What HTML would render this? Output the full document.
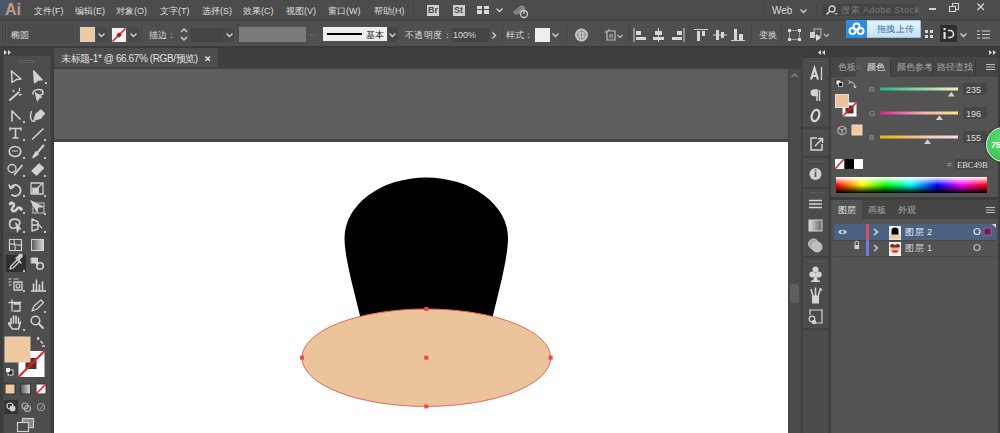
<!DOCTYPE html>
<html><head><meta charset="utf-8">
<style>
*{box-sizing:border-box;margin:0;padding:0}
html,body{width:1000px;height:433px;overflow:hidden;background:#535353;font-family:"Liberation Sans",sans-serif;color:#d6d6d6}
.a{position:absolute}
.t{position:absolute;white-space:nowrap;font-size:10px;line-height:12px}
svg{position:absolute;overflow:visible}
.cb{font-size:9px;line-height:11px;color:#dadada}
.pt{font-size:9px;line-height:11px}
.mb{top:6px;font-size:9px;line-height:11px;color:#dcdcdc}
</style></head><body>

<!-- MENUBAR -->
<div class="a" style="left:0;top:0;width:1000px;height:20px;background:#4c4c4c"></div>
<div class="a" style="left:0;top:19px;width:1000px;height:2px;background:#434343"></div>
<div class="a" style="left:0;top:0;width:22px;height:16px;background:linear-gradient(90deg,#4a5868,#4c5058)"></div>
<div class="t" style="left:5px;top:1px;font-size:16px;line-height:18px;color:#c49a80;letter-spacing:0px;font-weight:bold">Ai</div>
<div class="t mb" style="left:34px">文件(F)</div>
<div class="t mb" style="left:75px">编辑(E)</div>
<div class="t mb" style="left:116px">对象(O)</div>
<div class="t mb" style="left:160px">文字(T)</div>
<div class="t mb" style="left:202px">选择(S)</div>
<div class="t mb" style="left:243px">效果(C)</div>
<div class="t mb" style="left:286px">视图(V)</div>
<div class="t mb" style="left:328px">窗口(W)</div>
<div class="t mb" style="left:374px">帮助(H)</div>
<div class="a" style="left:413px;top:2px;width:1px;height:15px;background:#444"></div>
<div class="a" style="left:427px;top:5px;width:12px;height:11px;background:#cfcfcf"></div>
<div class="t" style="left:428px;top:5px;font-size:9px;line-height:11px;color:#4a4a4a;font-weight:bold">Br</div>
<div class="a" style="left:453px;top:5px;width:12px;height:11px;background:#cfcfcf"></div>
<div class="t" style="left:454px;top:5px;font-size:9px;line-height:11px;color:#4a4a4a;font-weight:bold">St</div>
<div class="a" style="left:477px;top:6px;width:5px;height:3px;background:#d8d8d8"></div>
<div class="a" style="left:484px;top:6px;width:5px;height:3px;background:#d8d8d8"></div>
<div class="a" style="left:477px;top:10px;width:5px;height:4px;background:#d8d8d8"></div>
<div class="a" style="left:484px;top:10px;width:5px;height:4px;background:#d8d8d8"></div>
<svg style="left:496px;top:8px" width="8" height="5"><path d="M0.5 0.5 L3.5 3.5 L6.5 0.5" stroke="#d0d0d0" stroke-width="1.3" fill="none"/></svg>
<svg style="left:512px;top:3px" width="18" height="16"><path d="M2 9 L9 3 L12 4 L4 11 Z M6 11 L13 5" stroke="#8a8a8a" stroke-width="1.5" fill="#777"/><circle cx="12" cy="11" r="3.5" stroke="#cfcfcf" stroke-width="1.3" fill="#4c4c4c"/><path d="M12 7 V11" stroke="#cfcfcf" stroke-width="1.3"/></svg>
<div class="t" style="left:772px;top:5px;font-size:10px;color:#d8d8d8">Web</div>
<svg style="left:800px;top:9px" width="8" height="5"><path d="M0.5 0.5 L3.5 3.5 L6.5 0.5" stroke="#d0d0d0" stroke-width="1.3" fill="none"/></svg>
<div class="a" style="left:763px;top:2px;width:1px;height:15px;background:#444"></div>
<div class="a" style="left:816px;top:2px;width:1px;height:15px;background:#444"></div>
<div class="a" style="left:822px;top:4px;width:94px;height:12px;background:#444444"></div>
<svg style="left:825px;top:5px" width="14" height="11"><circle cx="7" cy="4" r="3" stroke="#d8d8d8" stroke-width="1.3" fill="none"/><path d="M4.8 6.2 L1.5 9.5" stroke="#d8d8d8" stroke-width="1.6"/><path d="M9.5 8 L11 9.5 L12.5 8" stroke="#d8d8d8" stroke-width="1" fill="none"/></svg>
<div class="t" style="left:841px;top:4px;font-size:9px;line-height:12px;color:#7a7a7a;letter-spacing:0.5px">搜索 Adobe Stock</div>
<div class="a" style="left:929px;top:8px;width:7px;height:2px;background:#d0d0d0"></div>
<svg style="left:949px;top:3px" width="11" height="10"><path d="M3.5 3 V0.5 H9.5 V6.5 H6.5" stroke="#d0d0d0" stroke-width="1.1" fill="none"/><rect x="0.5" y="3.5" width="6" height="5" stroke="#d0d0d0" stroke-width="1.1" fill="none"/></svg>
<svg style="left:977px;top:3px" width="8" height="8"><path d="M0.5 0.5 L7 7 M7 0.5 L0.5 7" stroke="#d0d0d0" stroke-width="1.3"/></svg>

<!-- CONTROL BAR -->
<div class="a" style="left:0;top:21px;width:1000px;height:25px;background:#4f4f4f"></div>
<div class="a" style="left:0;top:46px;width:1000px;height:2px;background:#3a3a3a"></div>
<div class="a" style="left:2px;top:24px;width:1px;height:19px;background:#444"></div>
<div class="a" style="left:5px;top:24px;width:1px;height:19px;background:#444"></div>
<div class="a" style="left:8px;top:24px;width:66px;height:19px;background:#4b4b4b;border:1px solid #474747"></div>
<div class="t cb" style="left:11px;top:30px">椭圆</div>
<div class="a" style="left:76px;top:24px;width:1px;height:19px;background:#454545"></div>
<div class="a" style="left:80px;top:27px;width:15px;height:15px;background:#efc89e;border:1px solid #d9d0c4"></div>
<div class="a" style="left:96px;top:27px;width:11px;height:15px;background:#474747"></div>
<svg style="left:98px;top:33px" width="8" height="5"><path d="M0.5 0.5 L3.5 3.5 L6.5 0.5" stroke="#d0d0d0" stroke-width="1.4" fill="none"/></svg>
<div class="a" style="left:109px;top:24px;width:1px;height:19px;background:#454545"></div>
<svg style="left:112px;top:28px" width="15" height="14"><rect x="0" y="0" width="14" height="14" fill="#f2f2f2"/><path d="M0.5 13.5 L13.5 0.5" stroke="#c0283a" stroke-width="1.6"/><rect x="5" y="5" width="4" height="4" fill="#a02030" transform="rotate(45 7 7)"/></svg>
<div class="a" style="left:128px;top:27px;width:11px;height:15px;background:#474747"></div>
<svg style="left:130px;top:33px" width="8" height="5"><path d="M0.5 0.5 L3.5 3.5 L6.5 0.5" stroke="#d0d0d0" stroke-width="1.4" fill="none"/></svg>
<div class="a" style="left:141px;top:24px;width:1px;height:19px;background:#454545"></div>
<div class="t cb" style="left:149px;top:30px">描边：</div>
<svg style="left:180px;top:28px" width="9" height="13"><path d="M1 4 L4 1 L7 4 M1 9 L4 12 L7 9" stroke="#d0d0d0" stroke-width="1.4" fill="none"/></svg>
<div class="a" style="left:190px;top:28px;width:32px;height:14px;background:#444444"></div>
<div class="a" style="left:222px;top:28px;width:12px;height:14px;background:#474747"></div>
<svg style="left:226px;top:33px" width="8" height="5"><path d="M0.5 0.5 L3.5 3.5 L6.5 0.5" stroke="#d0d0d0" stroke-width="1.4" fill="none"/></svg>
<div class="a" style="left:237px;top:24px;width:1px;height:19px;background:#454545"></div>
<div class="a" style="left:239px;top:27px;width:67px;height:15px;background:#7a7a7a"></div>
<svg style="left:309px;top:33px" width="8" height="5"><path d="M0.5 0.5 L3.5 3.5 L6.5 0.5" stroke="#5e5e5e" stroke-width="1.4" fill="none"/></svg>
<div class="a" style="left:323px;top:27px;width:64px;height:14px;background:#eeeeee"></div>
<div class="a" style="left:327px;top:33px;width:35px;height:2px;background:#000"></div>
<div class="t cb" style="left:366px;top:30px;color:#222">基本</div>
<div class="a" style="left:388px;top:27px;width:10px;height:15px;background:#454545"></div>
<svg style="left:389px;top:33px" width="8" height="5"><path d="M0.5 0.5 L3.5 3.5 L6.5 0.5" stroke="#d0d0d0" stroke-width="1.4" fill="none"/></svg>
<div class="t cb" style="left:405px;top:30px;letter-spacing:0.4px">不透明度：</div>
<div class="a" style="left:452px;top:28px;width:37px;height:14px;background:#444444"></div>
<div class="t cb" style="left:453px;top:30px;font-size:9px">100%</div>
<svg style="left:492px;top:32px" width="5" height="8"><path d="M0.5 0.5 L3.5 3.5 L0.5 6.5" stroke="#d0d0d0" stroke-width="1.4" fill="none"/></svg>
<div class="a" style="left:502px;top:24px;width:1px;height:19px;background:#454545"></div>
<div class="t cb" style="left:506px;top:30px">样式：</div>
<div class="a" style="left:535px;top:28px;width:15px;height:14px;background:#eeeeee"></div>
<svg style="left:552px;top:33px" width="8" height="5"><path d="M0.5 0.5 L3.5 3.5 L6.5 0.5" stroke="#d0d0d0" stroke-width="1.4" fill="none"/></svg>
<div class="a" style="left:566px;top:24px;width:1px;height:19px;background:#454545"></div>
<svg style="left:574px;top:28px" width="16" height="15"><circle cx="7.5" cy="7" r="6.5" fill="#c8c8c8"/><circle cx="7.5" cy="7" r="4" fill="none" stroke="#8a8a8a" stroke-width="1"/><path d="M7.5 2 V12 M2.5 7 H12.5" stroke="#8a8a8a" stroke-width="0.8"/></svg>
<div class="a" style="left:601px;top:24px;width:1px;height:19px;background:#454545"></div>
<svg style="left:605px;top:29px" width="20" height="13"><path d="M2 2 H10 V11 H2 Z" stroke="#bdbdbd" stroke-width="1.2" fill="none"/><path d="M0 3 H2 M4 0 V2" stroke="#bdbdbd" stroke-width="1"/><rect x="4" y="5" width="4" height="4" fill="#888"/><path d="M12.5 6 L15 8.5 L17.5 6" stroke="#bdbdbd" stroke-width="1.2" fill="none"/></svg>
<div class="a" style="left:629px;top:24px;width:1px;height:19px;background:#454545"></div>
<svg style="left:633px;top:28px" width="14" height="14"><path d="M1 0 V14" stroke="#cfcfcf" stroke-width="1"/><rect x="3" y="3" width="5" height="4" fill="#d8d8d8"/><rect x="3" y="9" width="10" height="3" fill="#d8d8d8"/></svg>
<svg style="left:652px;top:28px" width="14" height="14"><path d="M6.5 0 V14" stroke="#cfcfcf" stroke-width="1"/><rect x="3" y="3" width="7" height="4" fill="#d8d8d8"/><rect x="1" y="9" width="11" height="3" fill="#d8d8d8"/></svg>
<svg style="left:671px;top:28px" width="14" height="14"><path d="M13 0 V14" stroke="#cfcfcf" stroke-width="1"/><rect x="6" y="3" width="5" height="4" fill="#d8d8d8"/><rect x="1" y="9" width="10" height="3" fill="#d8d8d8"/></svg>
<div class="a" style="left:689px;top:24px;width:1px;height:19px;background:#454545"></div>
<svg style="left:694px;top:28px" width="14" height="14"><path d="M0 1.5 H14" stroke="#cfcfcf" stroke-width="1"/><rect x="3" y="3" width="3" height="10" fill="#d8d8d8"/><rect x="8" y="3" width="3" height="5" fill="#d8d8d8"/></svg>
<svg style="left:713px;top:28px" width="14" height="14"><path d="M0 7 H14" stroke="#cfcfcf" stroke-width="1"/><rect x="3" y="2" width="3" height="10" fill="#d8d8d8"/><rect x="8" y="4" width="3" height="6" fill="#d8d8d8"/></svg>
<svg style="left:731px;top:28px" width="14" height="14"><path d="M0 12.5 H14" stroke="#cfcfcf" stroke-width="1"/><rect x="3" y="1" width="3" height="11" fill="#d8d8d8"/><rect x="8" y="6" width="4" height="6" fill="#d8d8d8"/></svg>
<div class="a" y="" style="left:751px;top:24px;width:1px;height:19px;background:#454545"></div>
<div class="t cb" style="left:759px;top:30px">变换</div>
<div class="a" style="left:781px;top:24px;width:1px;height:19px;background:#454545"></div>
<svg style="left:788px;top:29px" width="13" height="12"><rect x="0" y="0" width="3" height="3" fill="#d8d8d8"/><rect x="10" y="0" width="3" height="3" fill="#d8d8d8"/><rect x="0" y="9" width="3" height="3" fill="#d8d8d8"/><rect x="10" y="9" width="3" height="3" fill="#d8d8d8"/><path d="M3 1.5 H10 M3 10.5 H10 M1.5 3 V9 M11.5 3 V9" stroke="#9a9a9a" stroke-width="1"/></svg>
<svg style="left:809px;top:28px" width="22" height="14"><rect x="5" y="1" width="7" height="7" fill="none" stroke="#bdbdbd" stroke-width="1"/><rect x="1" y="4" width="5" height="6" fill="#cfcfcf"/><path d="M7 6 L12 10 L7 13 Z" fill="#e0e0e0"/><path d="M15 6 L17.5 8.5 L20 6" stroke="#bdbdbd" stroke-width="1.2" fill="none"/></svg>
<svg style="left:925px;top:30px" width="9" height="9"><rect x="0" y="0" width="3" height="3" fill="#d8d8d8"/><rect x="5" y="0" width="3" height="3" fill="#d8d8d8"/><rect x="0" y="5" width="3" height="3" fill="#d8d8d8"/><rect x="5" y="5" width="3" height="3" fill="#d8d8d8"/></svg>
<div class="a" style="left:940px;top:25px;width:17px;height:17px;background:#2e2e2e"></div>
<svg style="left:943px;top:28px" width="12" height="12"><rect x="0.5" y="0" width="2.2" height="2.2" fill="#e0e0e0"/><rect x="0.5" y="4" width="2.2" height="7" fill="#e0e0e0"/><path d="M5 2.5 H7 A3.5 3.5 0 0 1 7 9.5 H5" stroke="#e0e0e0" stroke-width="1.6" fill="none"/></svg>
<svg style="left:960px;top:33px" width="8" height="5"><path d="M0.5 0.5 L3.5 3.5 L6.5 0.5" stroke="#d0d0d0" stroke-width="1.4" fill="none"/></svg>
<svg style="left:977px;top:30px" width="14" height="10"><path d="M0 1 H3 M5 1 H13 M0 4.5 H3 M5 4.5 H13 M0 8 H3 M5 8 H13" stroke="#cfcfcf" stroke-width="1.2"/></svg>
<div class="a" style="left:846px;top:20px;width:75px;height:18px;background:linear-gradient(#e6f4fd,#c4e3f8);border-radius:1px;border:1px solid #8ec3ea"></div>
<div class="a" style="left:846px;top:20px;width:21px;height:18px;background:#2b8de2"></div>
<svg style="left:848px;top:22px" width="17" height="14"><circle cx="8.5" cy="4.5" r="3" fill="none" stroke="#fff" stroke-width="2"/><circle cx="4.5" cy="9" r="3" fill="none" stroke="#fff" stroke-width="2"/><circle cx="12.5" cy="9" r="3" fill="none" stroke="#fff" stroke-width="2"/></svg>
<div class="t" style="left:877px;top:23px;font-size:9px;color:#3a6aa6;letter-spacing:0.3px">拖拽上传</div>

<!-- TAB BAR -->
<div class="a" style="left:54px;top:48px;width:747px;height:20px;background:#3f3f3f"></div>
<div class="a" style="left:54px;top:48px;width:164px;height:20px;background:#4d4d4d"></div>
<div class="t" style="left:61px;top:53px;font-size:10px;color:#e2e2e2;letter-spacing:-0.4px">未标题-1* @ 66.67% (RGB/预览)</div>
<svg style="left:205px;top:56px" width="6" height="6"><path d="M0.5 0.5 L5 5 M5 0.5 L0.5 5" stroke="#e2e2e2" stroke-width="1.4"/></svg>

<!-- PASTEBOARD / ARTBOARD -->
<div class="a" style="left:54px;top:67px;width:734px;height:2px;background:#424242"></div>
<div class="a" style="left:54px;top:69px;width:734px;height:364px;background:#5e5e5e"></div>
<div class="a" style="left:54px;top:139px;width:734px;height:3px;background:#474747"></div>
<div class="a" style="left:54px;top:142px;width:734px;height:291px;background:#ffffff"></div>

<!-- LEFT TOOLBAR -->
<div class="a" style="left:0;top:48px;width:54px;height:385px;background:#3d3d3d"></div>
<div class="a" style="left:1px;top:48px;width:50px;height:8px;background:#404040"></div>
<svg style="left:4px;top:50px" width="8" height="5"><path d="M0 0 L3 2.5 L0 5 Z M4 0 L7 2.5 L4 5 Z" fill="#d8d8d8"/></svg>
<div class="a" style="left:3px;top:56px;width:48px;height:377px;background:#4d4d4d;border-left:1px solid #474747;border-right:1px solid #474747"></div>
<div class="a" style="left:18px;top:60px;width:17px;height:1px;background:#5e5e5e"></div>
<div class="a" style="left:18px;top:62px;width:17px;height:1px;background:#5e5e5e"></div>
<div class="a" style="left:6px;top:255px;width:20px;height:17px;background:#303030"></div>
<div class="a" style="left:5px;top:233px;width:44px;height:3px;background:#474747"></div>
<div class="a" style="left:6px;top:177px;width:42px;height:1px;background:#454545"></div>
<svg style="left:0;top:0" width="54" height="433">
<defs><linearGradient id="gg" x1="0" x2="1"><stop offset="0" stop-color="#555"/><stop offset="1" stop-color="#ddd"/></linearGradient></defs>
<g fill="none" stroke="#d2d2d2" stroke-width="1.5" stroke-linejoin="round" stroke-linecap="round">
 <path d="M11.5 71 L21 79 L16.5 79.5 L12 82.5 Z"/>
 <path d="M33.7 71 L42 79.8 L38 80 L34.6 82.6 Z" fill="#d2d2d2"/>
 <path d="M10 100 L18.5 92.5" stroke-width="2"/><path d="M13 90.5 L14 91.5 M19.5 88.5 V90.5 M21 94.5 L19.5 95" stroke-width="1.4"/>
 <path d="M33 94 C32 89 42 88 43 92 C43.5 95 40 95.5 37.5 95" stroke-width="1.5"/><path d="M35.5 92.5 L42 97.5 L39 98 L37.5 101 Z" fill="#d2d2d2" stroke-width="1"/>
 <path d="M12 121 V111 L20 119" stroke-width="1.6"/>
 <path d="M31.5 111.5 C30 115 30 118 32 121 L35 121" stroke-width="1.3"/><path d="M34 120 L36 114 L41 110 L44.5 113.5 L40.5 118.5 Z" fill="#d2d2d2" stroke-width="1.2"/>
 <path d="M10 128.5 H21 M10 128 V130 M21 128 V130 M15.5 128.5 V138 M13 138 H18" stroke-width="1.6"/>
 <path d="M32.5 139 L43 129" stroke-width="1.6"/>
 <ellipse cx="15" cy="151.5" rx="5.8" ry="5" stroke-width="1.6"/><path d="M12.5 151 H17.5" stroke-width="1"/>
 <path d="M33 157.5 L36 152 L38 154 Z" fill="#d2d2d2" stroke-width="1.6"/><path d="M37 153 L43.5 145.5" stroke-width="2"/>
 <circle cx="12" cy="168.5" r="4" stroke-width="1.4"/><path d="M14.5 174.5 L22 165.5" stroke-width="1.8"/>
 <path d="M32 171 L39 164 L43.5 168 L36.5 175 Z" fill="#d2d2d2" stroke-width="1.2"/>
 <path d="M10.5 187.5 A5.5 5.5 0 1 1 12 195" stroke-width="1.8"/><path d="M9 185 L10.5 188.5 L14 187" stroke-width="1.4"/>
 <rect x="31" y="183" width="12" height="11" stroke-width="1.3"/><rect x="32.5" y="188" width="6" height="5" fill="#d2d2d2" stroke-width="0.8"/><path d="M38 187.5 L42 184" stroke-width="1.4"/>
 <path d="M10 204 C12 202 14 203 14 205 C14 207 11 208 12 210 C13 212 16 211 17 209 C18 207 20 207 21.5 209.5" stroke-width="2.6"/><circle cx="11" cy="203" r="1.6" fill="#d2d2d2" stroke="none"/><circle cx="21" cy="209" r="1.6" fill="#d2d2d2" stroke="none"/>
 <rect x="33" y="203" width="11" height="10" stroke-width="1.1" stroke-dasharray="2 1.2"/><path d="M31 201 L37 212 L38 207 L43 207 Z" fill="#d2d2d2" stroke-width="1"/>
 <path d="M9.5 223.5 C9.5 219 15 218 19 220.5 C21 222.5 19 227 15 228 C11 229 9.5 227 9.5 223.5 Z" stroke-width="1.6"/><path d="M16 223 L21 229 L18.5 229 L17.5 232 Z" fill="#d2d2d2" stroke-width="1"/>
 <path d="M32 219 L38 222 V229 L32 231 Z M32 225 H38" stroke-width="1.4"/><path d="M38 224 L42 228" stroke-width="1.1"/>
 <rect x="9.5" y="239.5" width="12" height="11" stroke-width="1.2"/><path d="M9.5 244 C13 243 17 246 21.5 245 M14 239.5 C14 243 16 247 15 250.5" stroke-width="1.1"/>
</g>
<rect x="31.5" y="239.5" width="12" height="11" fill="url(#gg)" stroke="#d2d2d2" stroke-width="1"/>
<g fill="none" stroke="#d2d2d2" stroke-width="1.5" stroke-linejoin="round" stroke-linecap="round">
 <path d="M10 269 L11 266 L17.5 259.5 L19.5 261.5 L13 268 Z" stroke-width="1.3"/><path d="M17 257.5 L20 254.5 C21.5 254 22.5 255 22 256.5 L19 259.5" fill="#d2d2d2" stroke-width="1.4"/><path d="M16 258 L21 263" stroke-width="1.5"/>
 <rect x="31.5" y="258" width="6" height="5" fill="#d2d2d2" stroke-width="1"/><circle cx="40" cy="266" r="3.3" stroke-width="1.6"/><path d="M36 263 L38 265" stroke-width="1.1"/>
 <rect x="14" y="282" width="8" height="8" stroke-width="1.3"/><circle cx="18" cy="286" r="2" stroke-width="1.1"/><path d="M9 279 H11 M9 282 H11 M9 285 H11 M14 279 H18" stroke-width="1"/>
 <path d="M31.5 291 H44 M33.5 290 V284 M36.5 290 V280 M39.5 290 V285 M42.5 290 V282" stroke-width="1.6"/>
 <path d="M12 300 V311 M9 302.5 H21 M14 304 H20 V311 H14" stroke-width="1.3"/>
 <path d="M32 311 L34 306 L41 300 L43.5 302.5 L37 309 Z" stroke-width="1.3"/>
 <path d="M11 324 V318.5 M13.5 323 V316 M16 323 V316 M18.5 323.5 V318 M11 324 C9.5 322 8 322.5 9 324.5 L12.5 329 H18.5 L20.5 322" stroke-width="1.6"/>
 <circle cx="35.5" cy="320.5" r="4.3" stroke-width="1.5"/><path d="M38.5 323.5 L43 328" stroke-width="2"/>
</g>
<g fill="#c4c4c4">
<rect x="45" y="82" width="2" height="2"/><rect x="23" y="121" width="2" height="2"/><rect x="23" y="139" width="2" height="2"/><rect x="44" y="139" width="2" height="2"/><rect x="23" y="157" width="2" height="2"/><rect x="44" y="157" width="2" height="2"/><rect x="23" y="175" width="2" height="2"/><rect x="44" y="175" width="2" height="2"/><rect x="23" y="195" width="2" height="2"/><rect x="44" y="195" width="2" height="2"/><rect x="23" y="212" width="2" height="2"/><rect x="44" y="213" width="2" height="2"/><rect x="23" y="231" width="2" height="2"/><rect x="44" y="231" width="2" height="2"/><rect x="23" y="270" width="2" height="2"/><rect x="23" y="290" width="2" height="2"/><rect x="44" y="290" width="2" height="2"/><rect x="44" y="311" width="2" height="2"/><rect x="23" y="329" width="2" height="2"/>
</g>
<!-- fill/stroke -->
<rect x="18.5" y="351" width="26" height="26" fill="#ffffff"/>
<rect x="25.5" y="358" width="11" height="11" fill="#5e2a2a"/>
<path d="M18.5 377 L44.5 351" stroke="#e0202a" stroke-width="2"/>
<rect x="5" y="337" width="25" height="25" fill="#efc89e" stroke="#dcd2c6" stroke-width="1"/>
<path d="M37 338.5 L39.5 338.5 M38 337 L38 340 M40.5 341 L43 343.5 M43.5 345.5 L43.5 346.5 M42 346 L45 346" stroke="#cfcfcf" stroke-width="1.6" fill="none"/>
<rect x="8" y="370" width="5" height="5" fill="#222" stroke="#ddd" stroke-width="1"/><rect x="6" y="368" width="4" height="4" fill="#eee"/>
<!-- color mode -->
<rect x="5" y="384" width="10" height="10" fill="#efc89e" stroke="#333" stroke-width="1"/>
<rect x="20.5" y="384" width="10" height="10" fill="url(#gg)" stroke="#333" stroke-width="1"/>
<rect x="36" y="384" width="10" height="10" fill="#fff" stroke="#333" stroke-width="1"/><path d="M36 394 L46 384" stroke="#e0202a" stroke-width="1.6"/>
<!-- draw modes -->
<rect x="4" y="400" width="14" height="14" fill="#343434"/>
<circle cx="10" cy="406" r="3" fill="none" stroke="#cfcfcf" stroke-width="1.2"/><circle cx="12.5" cy="408.5" r="3" fill="#cfcfcf"/>
<circle cx="25" cy="406" r="3" fill="none" stroke="#b0b0b0" stroke-width="1.2"/><circle cx="27.5" cy="408.5" r="3" fill="none" stroke="#b0b0b0" stroke-width="1.2"/>
<circle cx="41" cy="407" r="3.5" fill="none" stroke="#9a9a9a" stroke-width="1.2"/><path d="M40 409 L43 405" stroke="#9a9a9a" stroke-width="1"/>
<!-- screen mode -->
<rect x="22.5" y="418.5" width="11" height="9" fill="#888" stroke="#cfcfcf" stroke-width="1.2"/><rect x="17.5" y="422.5" width="11" height="9" fill="#4d4d4d" stroke="#cfcfcf" stroke-width="1.2"/>
</svg>

<!-- SCROLLBAR + DOCK -->
<div class="a" style="left:788px;top:48px;width:13px;height:385px;background:#3f3f3f"></div>
<div class="a" style="left:788px;top:67px;width:13px;height:2px;background:#424242"></div>
<div class="a" style="left:788px;top:69px;width:13px;height:364px;background:#4a4a4a;border-left:1px solid #414141"></div>
<svg style="left:791px;top:73px" width="8" height="5"><path d="M0.5 4 L3.5 1 L6.5 4" stroke="#8a8a8a" stroke-width="1.2" fill="none"/></svg>
<div class="a" style="left:790px;top:284px;width:9px;height:19px;background:#5e5e5e;border-radius:3px"></div>
<div class="a" style="left:801px;top:48px;width:29px;height:385px;background:#3d3d3d"></div>
<svg style="left:818px;top:50px" width="8" height="5"><path d="M3 0 L0 2.5 L3 5 Z M7 0 L4 2.5 L7 5 Z" fill="#d8d8d8"/></svg>
<div class="a" style="left:802px;top:58px;width:27px;height:270px;background:#4c4c4c;border-left:1px solid #474747;border-right:1px solid #474747"></div>
<div class="a" style="left:802px;top:127px;width:27px;height:2px;background:#424242"></div>
<div class="a" style="left:802px;top:156px;width:27px;height:2px;background:#424242"></div>
<div class="a" style="left:802px;top:187px;width:27px;height:2px;background:#424242"></div>
<div class="a" style="left:802px;top:256px;width:27px;height:2px;background:#424242"></div>
<div class="a" style="left:802px;top:328px;width:27px;height:2px;background:#424242"></div>
<div class="a" style="left:802px;top:330px;width:27px;height:103px;background:#4b4b4b;border-left:1px solid #444;border-right:1px solid #444"></div>
<div class="a" style="left:809px;top:61px;width:14px;height:1px;background:#5a5a5a"></div><div class="a" style="left:809px;top:131px;width:14px;height:1px;background:#5a5a5a"></div><div class="a" style="left:809px;top:161px;width:14px;height:1px;background:#5a5a5a"></div><div class="a" style="left:809px;top:192px;width:14px;height:1px;background:#5a5a5a"></div><div class="a" style="left:809px;top:261px;width:14px;height:1px;background:#5a5a5a"></div>
<svg style="left:800px;top:0" width="30" height="433">
<g fill="none" stroke="#d4d4d4" stroke-width="1.5">
 <path d="M11 79.5 L14.5 68.5 L18 79.5 M12 76 H17" stroke-width="2.2"/>
 <path d="M21.5 67 V80" stroke-width="1.3"/>
 <path d="M17 90 V101 M19.5 90 V101" stroke-width="1.4"/><path d="M17 90 H14 A2.6 2.6 0 0 0 14 95.5 H17 Z" fill="#d4d4d4"/>
 <ellipse cx="15.5" cy="115.5" rx="3.6" ry="5.8" transform="rotate(18 15.5 115.5)" stroke-width="2.4"/>
 <path d="M17 138 H11 V150 H22 V144" stroke-width="1.5"/><path d="M15 146 L22 139 M18 138.5 H22.5 V143" stroke-width="1.5"/>
 <path d="M9 200.5 H22 M9 204 H22 M9 207.5 H22" stroke-width="1.5"/>
 <circle cx="13.5" cy="244" r="5" stroke="#c8c8c8" fill="#aaa" stroke-width="1"/><circle cx="17" cy="247" r="5" stroke="#c8c8c8" fill="#bdbdbd" stroke-width="1"/>
 <path d="M10 315 V310 H22 V323 H15" stroke-width="1.2"/>
</g>
<circle cx="15.5" cy="174" r="6" fill="#d0d0d0"/><rect x="14.7" y="172" width="1.6" height="5" fill="#555"/><rect x="14.7" y="169.5" width="1.6" height="1.6" fill="#555"/>
<defs><linearGradient id="dg" x1="0" x2="1"><stop offset="0" stop-color="#ddd"/><stop offset="1" stop-color="#666"/></linearGradient></defs>
<rect x="9" y="220" width="13" height="11" fill="url(#dg)" stroke="#d4d4d4" stroke-width="1"/>
<circle cx="12.3" cy="274.5" r="3" fill="#d4d4d4"/><circle cx="18.7" cy="274.5" r="3" fill="#d4d4d4"/><circle cx="15.5" cy="269.5" r="3" fill="#d4d4d4"/><path d="M15.5 272 L13 281 H18 Z" fill="#d4d4d4"/><rect x="11" y="280.5" width="9" height="1.5" fill="#d4d4d4"/>
<path d="M13 296 L11 289 M15.5 296 V287.5 M18 296 L20.5 289" stroke="#d4d4d4" stroke-width="1.5"/><path d="M19.5 288.5 L22 290" stroke="#d4d4d4" stroke-width="1.5"/><rect x="12" y="295.5" width="7" height="8" fill="#d4d4d4"/>
<circle cx="12" cy="319" r="2.8" fill="#4c4c4c" stroke="#d4d4d4" stroke-width="1.2"/><circle cx="14" cy="322" r="2.2" fill="#d4d4d4"/>
</svg>

<!-- RIGHT PANEL -->
<div class="a" style="left:830px;top:48px;width:170px;height:385px;background:#3c3c3c"></div>
<svg style="left:989px;top:50px" width="8" height="5"><path d="M0 0 L3 2.5 L0 5 Z M4 0 L7 2.5 L4 5 Z" fill="#d8d8d8"/></svg>
<div class="a" style="left:831px;top:57px;width:167px;height:20px;background:#454545"></div>
<div class="a" style="left:856px;top:57px;width:34px;height:20px;background:#535353"></div>
<div class="t pt" style="left:838px;top:62px;color:#a8a8a8">色板</div>
<div class="t pt" style="left:856px;top:61px;color:#9a9a9a;font-size:8px">::</div>
<div class="t pt" style="left:867px;top:62px;color:#e8e8e8">颜色</div>
<div class="a" style="left:890px;top:60px;width:1px;height:15px;background:#3a3a3a"></div>
<div class="t pt" style="left:897px;top:62px;color:#a8a8a8">颜色参考</div>
<div class="a" style="left:932px;top:60px;width:1px;height:15px;background:#3a3a3a"></div>
<div class="t pt" style="left:937px;top:62px;color:#a8a8a8">路径查找</div>
<div class="a" style="left:975px;top:60px;width:1px;height:15px;background:#3a3a3a"></div>
<svg style="left:986px;top:64px" width="10" height="7"><path d="M0 0.5 H9 M0 3 H9 M0 5.5 H9" stroke="#bdbdbd" stroke-width="1"/></svg>
<div class="a" style="left:831px;top:77px;width:167px;height:120px;background:#535353"></div>
<div class="a" style="left:830px;top:197px;width:170px;height:3px;background:#3c3c3c"></div>

<!-- color panel content -->
<svg style="left:830px;top:76px" width="170" height="121">
 <rect x="6" y="4" width="5" height="5" fill="#eee" stroke="#222" stroke-width="0.8"/><rect x="8.5" y="6.5" width="4" height="4" fill="#111" stroke="#ddd" stroke-width="0.8"/>
 <path d="M20 6 C23 6 25 8 25 11" stroke="#cfcfcf" stroke-width="1" fill="none"/><path d="M18.5 4.5 L20.5 6 L18.5 7.5 M23.5 10 L25 12 L26.5 10" stroke="#cfcfcf" stroke-width="0.9" fill="none"/>
 <rect x="12.5" y="26.5" width="14" height="14" fill="#fff"/><rect x="15.5" y="29.5" width="8" height="8" fill="#5a2c2c"/><path d="M12.5 40.5 L26.5 26.5" stroke="#e0202a" stroke-width="1.6"/>
 <rect x="5.5" y="18.5" width="13" height="13" fill="#ebc49b" stroke="#e6ddd2" stroke-width="1"/>
 <path d="M8 52 L12 50 L16 52 V57 L12 59 L8 57 Z M8 52 L12 54 L16 52 M12 54 V59" stroke="#b8b8b8" stroke-width="1" fill="none"/>
 <rect x="22" y="49" width="10" height="10" fill="#f2c998" stroke="#e5dacb" stroke-width="1"/>
 <defs>
  <linearGradient id="gR" x1="0" x2="1"><stop offset="0" stop-color="#13c08f"/><stop offset="1" stop-color="#fff0b6"/></linearGradient>
  <linearGradient id="gG" x1="0" x2="1"><stop offset="0" stop-color="#e21d9a"/><stop offset="0.55" stop-color="#f2b0b0"/><stop offset="1" stop-color="#ffe67d"/></linearGradient>
  <linearGradient id="gB" x1="0" x2="1"><stop offset="0" stop-color="#e7b800"/><stop offset="0.55" stop-color="#f3c7a0"/><stop offset="1" stop-color="#f6dde6"/></linearGradient>
  <linearGradient id="spec" x1="0" x2="1">
   <stop offset="0" stop-color="#ff0000"/><stop offset="0.17" stop-color="#ffff00"/><stop offset="0.33" stop-color="#00ff00"/><stop offset="0.5" stop-color="#00ffff"/><stop offset="0.67" stop-color="#0000ff"/><stop offset="0.83" stop-color="#ff00ff"/><stop offset="1" stop-color="#ff0000"/>
  </linearGradient>
  <linearGradient id="specW" x1="0" y1="0" x2="0" y2="1"><stop offset="0" stop-color="#fff" stop-opacity="1"/><stop offset="0.5" stop-color="#fff" stop-opacity="0"/><stop offset="0.5" stop-color="#000" stop-opacity="0"/><stop offset="1" stop-color="#000" stop-opacity="1"/></linearGradient>
 </defs>
 <text x="39" y="16" font-size="8" fill="#9a9a9a" font-family="Liberation Sans">R</text>
 <rect x="50" y="11.5" width="78" height="3" fill="url(#gR)"/>
 <path d="M117.8 20.5 L121.3 15.8 L124.8 20.5 Z" fill="#cfcfcf"/>
 <rect x="133" y="7" width="24" height="12" fill="#474747"/>
 <text x="136" y="16.5" font-size="9" fill="#dcdcdc" font-family="Liberation Sans">235</text>
 <text x="39" y="40" font-size="8" fill="#9a9a9a" font-family="Liberation Sans">G</text>
 <rect x="50" y="35.5" width="78" height="3" fill="url(#gG)"/>
 <path d="M105.9 44 L109.4 39.3 L112.9 44 Z" fill="#cfcfcf"/>
 <rect x="133" y="31" width="24" height="12" fill="#474747"/>
 <text x="136" y="40.5" font-size="9" fill="#dcdcdc" font-family="Liberation Sans">196</text>
 <text x="39" y="64" font-size="8" fill="#9a9a9a" font-family="Liberation Sans">B</text>
 <rect x="50" y="59.5" width="78" height="3" fill="url(#gB)"/>
 <path d="M94 68 L97.5 63.3 L101 68 Z" fill="#cfcfcf"/>
 <rect x="133" y="55" width="24" height="12" fill="#474747"/>
 <text x="136" y="64.5" font-size="9" fill="#dcdcdc" font-family="Liberation Sans">155</text>
 <rect x="5" y="83" width="9" height="10" fill="#fff"/><path d="M5 93 L14 83" stroke="#e0202a" stroke-width="1.4"/>
 <rect x="15" y="83" width="9" height="10" fill="#000"/>
 <rect x="24" y="83" width="9" height="10" fill="#fff"/>
 <text x="117" y="91" font-size="8" fill="#9a9a9a" font-family="Liberation Sans">#</text>
 <rect x="125" y="83" width="32" height="11" rx="1" fill="#474747"/>
 <text x="127" y="91.5" font-size="8.5" fill="#e0e0e0" font-family="Liberation Serif">EBC49B</text>
 <rect x="6" y="101" width="151" height="16" fill="url(#spec)"/>
 <rect x="6" y="101" width="151" height="16" fill="url(#specW)"/>
</svg>

<!-- layers panel -->
<div class="a" style="left:831px;top:200px;width:167px;height:19px;background:#454545"></div>
<div class="a" style="left:831px;top:200px;width:31px;height:19px;background:#535353"></div>
<div class="t pt" style="left:838px;top:205px;color:#e8e8e8">图层</div>
<div class="t pt" style="left:868px;top:205px;color:#a8a8a8">画板</div>
<div class="a" style="left:891px;top:203px;width:1px;height:14px;background:#424242"></div>
<div class="t pt" style="left:898px;top:205px;color:#a8a8a8">外观</div>
<div class="a" style="left:921px;top:203px;width:1px;height:14px;background:#424242"></div>
<svg style="left:986px;top:207px" width="10" height="7"><path d="M0 0.5 H9 M0 3 H9 M0 5.5 H9" stroke="#bdbdbd" stroke-width="1"/></svg>
<div class="a" style="left:831px;top:219px;width:167px;height:214px;background:#535353"></div>
<div class="a" style="left:834px;top:224px;width:162px;height:16px;background:#4a6282"></div>
<div class="a" style="left:834px;top:240px;width:162px;height:1px;background:#474747"></div>
<div class="a" style="left:834px;top:256px;width:162px;height:1px;background:#4a4a4a"></div>
<svg style="left:830px;top:220px" width="170" height="40">
 <path d="M8 12 C10 9 15 9 17 12 C15 15 10 15 8 12 Z" fill="#c8d4e0"/><circle cx="12.5" cy="12" r="1.5" fill="#4a6282"/>
 <rect x="36" y="4" width="3" height="16" fill="#d9505f"/>
 <rect x="36" y="20" width="3" height="16" fill="#6a7ee0"/>
 <path d="M44 9 L47.5 12 L44 15" stroke="#dde3ea" stroke-width="1.4" fill="none"/>
 <path d="M44 25 L47.5 28 L44 31" stroke="#cfcfcf" stroke-width="1.4" fill="none"/>
 <rect x="59" y="6" width="12" height="14" fill="#f4f2ee"/><path d="M61.5 15 V10 C61.5 6.5 68.5 6.5 68.5 10 V15 Z" fill="#000"/><rect x="59.5" y="14.5" width="11" height="5" fill="#e6cfa8"/>
 <rect x="59" y="22" width="12" height="14" fill="#f4f0ec"/><ellipse cx="65" cy="29.5" rx="4.5" ry="3.5" fill="#eab098"/><path d="M60 27 C60 23 63 23.5 65 25 C67 23.5 70 23 70 27 L68 27.5 L62 27.5 Z" fill="#7a2a2a"/><rect x="62.5" y="30.5" width="5" height="2" fill="#d02828"/>
 <path d="M25 25 V23 A1.8 1.8 0 0 1 28.6 23 V25" stroke="#cfcfcf" stroke-width="1" fill="none"/><rect x="24.5" y="25" width="4.6" height="4" fill="#cfcfcf"/>
 <circle cx="147" cy="11.5" r="3" stroke="#dfe6ee" stroke-width="1.2" fill="none"/>
 <circle cx="147" cy="27.5" r="3" stroke="#bdbdbd" stroke-width="1.2" fill="none"/>
 <rect x="154" y="8" width="7" height="7" fill="#4a2a58" stroke="#e04080" stroke-width="1"/>
 <path d="M162 4 L166 4 L166 8 Z" fill="#cfd8e2"/>
</svg>
<div class="t" style="left:905px;top:227px;font-size:9px;line-height:11px;color:#eef2f6;letter-spacing:0.5px">图层 2</div>
<div class="t" style="left:905px;top:243px;font-size:9px;line-height:11px;color:#dcdcdc;letter-spacing:0.5px">图层 1</div>
<!-- green widget -->
<div class="a" style="left:986px;top:127px;width:35px;height:35px;border-radius:50%;background:radial-gradient(circle at 45% 40%,#5fe070,#2eb845);border:1.5px solid #e6f6e6;box-shadow:-1px 0 2px rgba(60,20,20,0.5)"></div>
<div class="t" style="left:991px;top:139px;font-size:9px;color:#fff;font-style:italic;font-weight:bold">75</div>

<!-- DRAWING -->
<svg style="left:0;top:0" width="1000" height="433">
  <path d="M344.5 238 A81.75 60.5 0 0 1 508 238 C508 258 499 290 492 320 L361 320 C354 290 344.5 258 344.5 238 Z" fill="#000"/>
  <ellipse cx="426.3" cy="357.7" rx="124.3" ry="48.7" fill="#ebc49b" stroke="#e8665a" stroke-width="1"/>
  <rect x="424.3" y="355.7" width="4" height="4" fill="#f04848"/>
  <rect x="300" y="355.7" width="4" height="4" fill="#f04848"/>
  <rect x="548.6" y="355.7" width="4" height="4" fill="#f04848"/>
  <rect x="424.3" y="307" width="4" height="4" fill="#f04848"/>
  <rect x="424.3" y="404.4" width="4" height="4" fill="#f04848"/>
</svg>

</body></html>
